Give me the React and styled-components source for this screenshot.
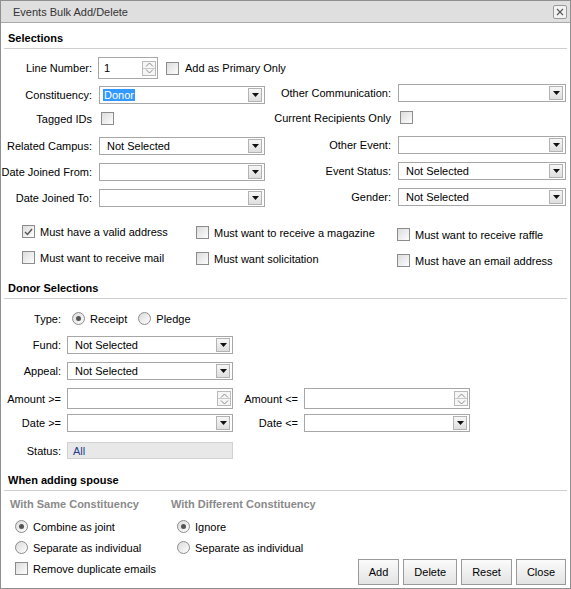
import React from "react";
import styled, { createGlobalStyle } from "styled-components";

const FONT = `"Liberation Sans", Arial, sans-serif`;

const Global = createGlobalStyle`
  html, body { margin: 0; padding: 0; background: #fff; }
  body { font-family: ${FONT}; font-size: 11px; color: #000; }
  * { box-sizing: border-box; }
`;

const Window = styled.div`
  width: 571px;
  height: 589px;
  border: 1px solid #8f8f8f;
  display: flex;
  flex-direction: column;
  background: #fff;
  overflow: hidden;
`;

const TitleBar = styled.div`
  height: 22px;
  flex-shrink: 0;
  background: #dfdfdf;
  border-bottom: 1px solid #a9a9a9;
  display: flex;
  align-items: center;
  justify-content: space-between;
  padding: 0 3px 0 12px;
  color: #333;
`;

const CloseBox = styled.div`
  width: 14px;
  height: 14px;
  border: 1px solid #9a9a9a;
  border-radius: 2px;
  background: #f2f2f2;
  display: flex;
  align-items: center;
  justify-content: center;
`;

const SectionHeader = styled.div`
  margin: 0 3px;
  padding: ${(p) => p.$pt}px 4px 3px;
  border-bottom: 1px solid #cfcfcf;
  font-weight: bold;
  line-height: 13px;
  flex-shrink: 0;
`;

const SelGrid = styled.div`
  display: grid;
  grid-template-columns: 264px 293px;
  column-gap: 8px;
`;

const Column = styled.div`
  display: flex;
  flex-direction: column;
  padding-top: ${(p) => p.$pt || 0}px;
  gap: ${(p) => p.$gap || 0}px;
`;

const Row = styled.div`
  display: flex;
  align-items: center;
  height: ${(p) => p.$h}px;
  margin-top: ${(p) => p.$mt || 0}px;
  flex-shrink: 0;
`;

const Label = styled.div`
  width: ${(p) => p.$w}px;
  margin-right: ${(p) => (p.$mr === undefined ? 7 : p.$mr)}px;
  text-align: right;
  flex-shrink: 0;
  white-space: nowrap;
`;

const SelectBox = styled.div`
  width: ${(p) => p.$w}px;
  height: 18px;
  border: 1px solid #a7a7a7;
  background: #fff;
  display: flex;
  align-items: center;
  flex-shrink: 0;
`;

const SelectValue = styled.div`
  flex: 1;
  padding-left: ${(p) => (p.$hl ? 3 : 7)}px;
  white-space: nowrap;
  overflow: hidden;
`;

const Highlight = styled.span`
  background: #3399ff;
  color: #fff;
  padding: 1px 1px 2px;
`;

const DropButton = styled.div`
  width: 14px;
  height: 14px;
  margin-right: 2px;
  border: 1px solid #b3b3b3;
  background: linear-gradient(#f7f7f7, #dedede);
  display: flex;
  align-items: center;
  justify-content: center;
`;

const SpinBox = styled.div`
  width: ${(p) => p.$w}px;
  height: ${(p) => p.$h}px;
  margin-left: ${(p) => p.$ml || 0}px;
  border: 1px solid #a7a7a7;
  background: #fff;
  display: flex;
  align-items: center;
  flex-shrink: 0;
`;

const SpinValue = styled.div`
  flex: 1;
  padding-left: 5px;
`;

const SpinButtons = styled.div`
  width: 14px;
  height: 15px;
  margin-right: 1px;
  border: 1px solid #b9b9b9;
  display: flex;
  flex-direction: column;
`;

const SpinHalf = styled.div`
  flex: 1;
  display: flex;
  align-items: center;
  justify-content: center;
  background: #f6f6f6;
  border-top: ${(p) => (p.$bottom ? "1px solid #c9c9c9" : "none")};
`;

const CheckSquare = styled.div`
  width: 13px;
  height: 13px;
  margin-left: ${(p) => p.$ml || 0}px;
  border: 1px solid #8c8c8c;
  background: linear-gradient(135deg, #dcdcdc, #fdfdfd);
  display: flex;
  align-items: center;
  justify-content: center;
  flex-shrink: 0;
`;

const RadioCircle = styled.div`
  width: 13px;
  height: 13px;
  border-radius: 50%;
  border: 1px solid #8c8c8c;
  background: linear-gradient(135deg, #dcdcdc, #fdfdfd);
  display: flex;
  align-items: center;
  justify-content: center;
  flex-shrink: 0;
`;

const RadioDot = styled.div`
  width: 5px;
  height: 5px;
  border-radius: 50%;
  background: #555;
`;

const Option = styled.div`
  display: flex;
  align-items: center;
  height: 13px;
  gap: 5px;
  margin-left: ${(p) => p.$ml || 0}px;
  margin-top: ${(p) => p.$mt || 0}px;
  white-space: nowrap;
`;

const InlineText = styled.span`
  margin-left: ${(p) => p.$ml || 0}px;
  white-space: nowrap;
`;

const CheckGrid = styled.div`
  display: grid;
  grid-template-columns: 174px 201px 1fr;
  padding-left: 21px;
  margin-top: 18px;
`;

const DonorArea = styled.div`
  display: flex;
  flex-direction: column;
`;

const RadioGroup = styled.div`
  display: flex;
  align-items: center;
  gap: 11px;
  margin-left: 5px;
`;

const StatusBox = styled.div`
  width: 166px;
  height: 17px;
  background: #e8e8e8;
  border: 1px solid #d2d2d2;
  color: #22418b;
  padding-left: 5px;
  display: flex;
  align-items: center;
`;

const SpouseArea = styled.div`
  flex: 1;
  display: flex;
`;

const SpouseCols = styled.div`
  display: grid;
  grid-template-columns: 161px auto;
  padding-left: 9px;
  align-content: start;
`;

const SubHeading = styled.div`
  margin-top: 7px;
  line-height: 13px;
  font-weight: bold;
  color: #8a8a8a;
  white-space: nowrap;
`;

const ButtonBar = styled.div`
  margin: auto 4px 3px auto;
  display: flex;
  gap: 4px;
  align-self: flex-end;
`;

const Button = styled.button`
  height: 26px;
  padding: 0 10px;
  font-family: ${FONT};
  font-size: 11px;
  color: #000;
  border: 1px solid #9a9a9a;
  border-radius: 0;
  background: linear-gradient(#fbfbfb, #e3e3e3);
`;

const Triangle = () => (
  <svg width="7" height="4" viewBox="0 0 7 4">
    <polygon points="0,0 7,0 3.5,4" fill="#111" />
  </svg>
);

const Chevron = ({ up }) => (
  <svg width="9" height="5" viewBox="0 0 9 5">
    <polyline
      points={up ? "1,4.5 4.5,1 8,4.5" : "1,0.5 4.5,4 8,0.5"}
      fill="none"
      stroke="#8a8a8a"
      strokeWidth="1"
    />
  </svg>
);

const Select = ({ w = 166, value, hl }) => (
  <SelectBox $w={w}>
    <SelectValue $hl={hl}>{hl ? <Highlight>{value}</Highlight> : value}</SelectValue>
    <DropButton>
      <Triangle />
    </DropButton>
  </SelectBox>
);

const Spinner = ({ w, h, value, ml }) => (
  <SpinBox $w={w} $h={h} $ml={ml}>
    <SpinValue>{value}</SpinValue>
    <SpinButtons>
      <SpinHalf>
        <Chevron up />
      </SpinHalf>
      <SpinHalf $bottom>
        <Chevron />
      </SpinHalf>
    </SpinButtons>
  </SpinBox>
);

const Checkbox = ({ checked, ml }) => (
  <CheckSquare $ml={ml}>
    {checked && (
      <svg width="9" height="8" viewBox="0 0 9 8">
        <polyline points="1,4 3.5,6.5 8,1" fill="none" stroke="#555" strokeWidth="1.4" />
      </svg>
    )}
  </CheckSquare>
);

const Radio = ({ checked }) => <RadioCircle>{checked && <RadioDot />}</RadioCircle>;

const CheckOption = ({ checked, children }) => (
  <Option>
    <Checkbox checked={checked} />
    <span>{children}</span>
  </Option>
);

const RadioOption = ({ checked, children, mt, ml }) => (
  <Option $mt={mt} $ml={ml}>
    <Radio checked={checked} />
    <span>{children}</span>
  </Option>
);

export default function App() {
  return (
    <>
      <Global />
      <Window>
        <TitleBar>
          <span>Events Bulk Add/Delete</span>
          <CloseBox>
            <svg width="8" height="8" viewBox="0 0 8 8">
              <path d="M1 1 L7 7 M7 1 L1 7" stroke="#555" strokeWidth="1.1" />
            </svg>
          </CloseBox>
        </TitleBar>

        <SectionHeader $pt={9}>Selections</SectionHeader>

        <SelGrid>
          <Column>
            <Row $mt={8} $h={22}>
              <Label $w={91}>Line Number:</Label>
              <Spinner w={60} h={22} value="1" ml={-1} />
              <Checkbox ml={8} />
              <InlineText $ml={6}>Add as Primary Only</InlineText>
            </Row>
            <Row $mt={7} $h={18}>
              <Label $w={91}>Constituency:</Label>
              <Select value="Donor" hl />
            </Row>
            <Row $mt={8} $h={13}>
              <Label $w={91}>Tagged IDs</Label>
              <Checkbox ml={2} />
            </Row>
            <Row $mt={12} $h={18}>
              <Label $w={91}>Related Campus:</Label>
              <Select value="Not Selected" />
            </Row>
            <Row $mt={8} $h={18}>
              <Label $w={91}>Date Joined From:</Label>
              <Select value="" />
            </Row>
            <Row $mt={8} $h={18}>
              <Label $w={91}>Date Joined To:</Label>
              <Select value="" />
            </Row>
          </Column>

          <Column>
            <Row $mt={35} $h={18}>
              <Label $w={118}>Other Communication:</Label>
              <Select w={168} value="" />
            </Row>
            <Row $mt={9} $h={13}>
              <Label $w={118}>Current Recipients Only</Label>
              <Checkbox ml={2} />
            </Row>
            <Row $mt={12} $h={18}>
              <Label $w={118}>Other Event:</Label>
              <Select w={168} value="" />
            </Row>
            <Row $mt={8} $h={18}>
              <Label $w={118}>Event Status:</Label>
              <Select w={168} value="Not Selected" />
            </Row>
            <Row $mt={8} $h={18}>
              <Label $w={118}>Gender:</Label>
              <Select w={168} value="Not Selected" />
            </Row>
          </Column>
        </SelGrid>

        <CheckGrid>
          <Column $gap={13}>
            <CheckOption checked>Must have a valid address</CheckOption>
            <CheckOption>Must want to receive mail</CheckOption>
          </Column>
          <Column $gap={13} $pt={1}>
            <CheckOption>Must want to receive a magazine</CheckOption>
            <CheckOption>Must want solicitation</CheckOption>
          </Column>
          <Column $gap={13} $pt={3}>
            <CheckOption>Must want to receive raffle</CheckOption>
            <CheckOption>Must have an email address</CheckOption>
          </Column>
        </CheckGrid>

        <SectionHeader $pt={15}>Donor Selections</SectionHeader>

        <DonorArea>
          <Row $mt={13} $h={13}>
            <Label $w={60} $mr={6}>Type:</Label>
            <RadioGroup>
              <RadioOption checked>Receipt</RadioOption>
              <RadioOption>Pledge</RadioOption>
            </RadioGroup>
          </Row>
          <Row $mt={11} $h={18}>
            <Label $w={60} $mr={6}>Fund:</Label>
            <Select value="Not Selected" />
          </Row>
          <Row $mt={8} $h={18}>
            <Label $w={60} $mr={6}>Appeal:</Label>
            <Select value="Not Selected" />
          </Row>
          <Row $mt={8} $h={21}>
            <Label $w={60} $mr={6}>Amount &gt;=</Label>
            <Spinner w={166} h={21} value="" />
            <Label $w={65} $mr={6}>Amount &lt;=</Label>
            <Spinner w={166} h={21} value="" />
          </Row>
          <Row $mt={5} $h={18}>
            <Label $w={60} $mr={6}>Date &gt;=</Label>
            <Select value="" />
            <Label $w={65} $mr={6}>Date &lt;=</Label>
            <Select value="" />
          </Row>
          <Row $mt={10} $h={17}>
            <Label $w={60} $mr={6}>Status:</Label>
            <StatusBox>All</StatusBox>
          </Row>
        </DonorArea>

        <SectionHeader $pt={15}>When adding spouse</SectionHeader>

        <SpouseArea>
          <SpouseCols>
            <Column>
              <SubHeading>With Same Constituency</SubHeading>
              <RadioOption checked mt={9} ml={5}>Combine as joint</RadioOption>
              <RadioOption mt={8} ml={5}>Separate as individual</RadioOption>
              <Option $mt={8} $ml={5}>
                <Checkbox />
                <span>Remove duplicate emails</span>
              </Option>
            </Column>
            <Column>
              <SubHeading>With Different Constituency</SubHeading>
              <RadioOption checked mt={9} ml={6}>Ignore</RadioOption>
              <RadioOption mt={8} ml={6}>Separate as individual</RadioOption>
            </Column>
          </SpouseCols>
          <ButtonBar>
            <Button>Add</Button>
            <Button>Delete</Button>
            <Button>Reset</Button>
            <Button>Close</Button>
          </ButtonBar>
        </SpouseArea>
      </Window>
    </>
  );
}
